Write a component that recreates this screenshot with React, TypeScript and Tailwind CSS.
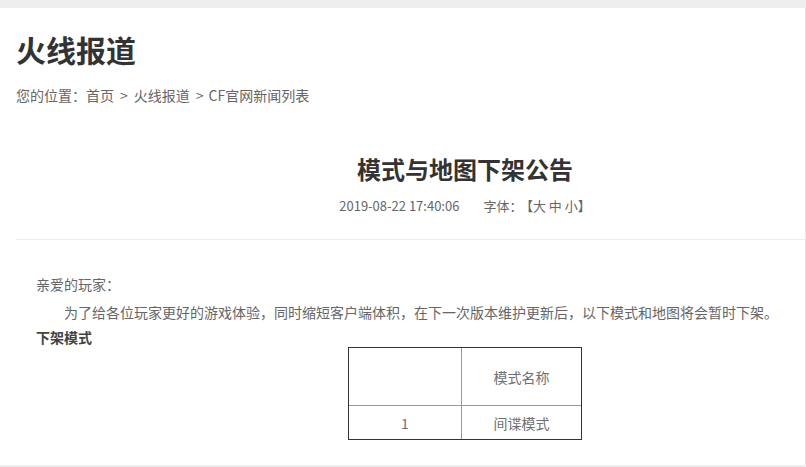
import React from 'react';

const font = { fontFamily: '"Noto Sans CJK SC", "Liberation Sans", sans-serif' };

export default function App() {
  return (
    <div className="h-[467px] overflow-hidden bg-[#eeeeee] pt-2" style={font}>
      <div className="h-[457px] w-[806px] overflow-hidden border-r border-[#e3e3e3] bg-white px-4 pt-[26px]">
        <h1 className="text-[30px] font-bold leading-[30px] text-[#333333]">火线报道</h1>
        <div className="mt-[21px] flex text-[14px] leading-[20px] text-[#666666]">
          <span>您的位置：首页</span>
          <span className="ml-[6px] mr-[6px]">&gt;</span>
          <span>火线报道</span>
          <span className="ml-[6px] mr-[5px]">&gt;</span>
          <span>CF官网新闻列表</span>
        </div>

        <div className="w-[898px]">
          <h2 className="mt-[49px] text-center text-[24px] font-bold leading-[30px] text-[#333333]">
            模式与地图下架公告
          </h2>
          <div className="mt-3 flex justify-center gap-6 text-[13px] leading-[20px] text-[#666666]">
            <span>2019-08-22 17:40:06</span>
            <span>
              字体：<span className="ml-1">【大 中 小】</span>
            </span>
          </div>
          <div className="mt-[23px] border-t border-[#eeeeee]" />

          <div className="px-5 text-[14px] leading-[20px] text-[#666666]">
            <p className="mt-[34px]">亲爱的玩家：</p>
            <p className="mt-2 indent-[2em]">
              为了给各位玩家更好的游戏体验，同时缩短客户端体积，在下一次版本维护更新后，以下模式和地图将会暂时下架。
            </p>
            <p className="mt-[5px] font-bold text-[#444444]">下架模式</p>
            <table className="mx-auto border-separate border-spacing-0 border border-[#333333] text-center text-[#707070]">
              <tbody>
                <tr className="h-[58px]">
                  <td className="w-[113px] border-r border-b border-[#999999]"></td>
                  <td className="w-[119px] border-b border-[#999999]">模式名称</td>
                </tr>
                <tr className="h-[33px]">
                  <td className="border-r border-[#999999]">1</td>
                  <td>间谍模式</td>
                </tr>
              </tbody>
            </table>
          </div>
        </div>
      </div>
    </div>
  );
}
